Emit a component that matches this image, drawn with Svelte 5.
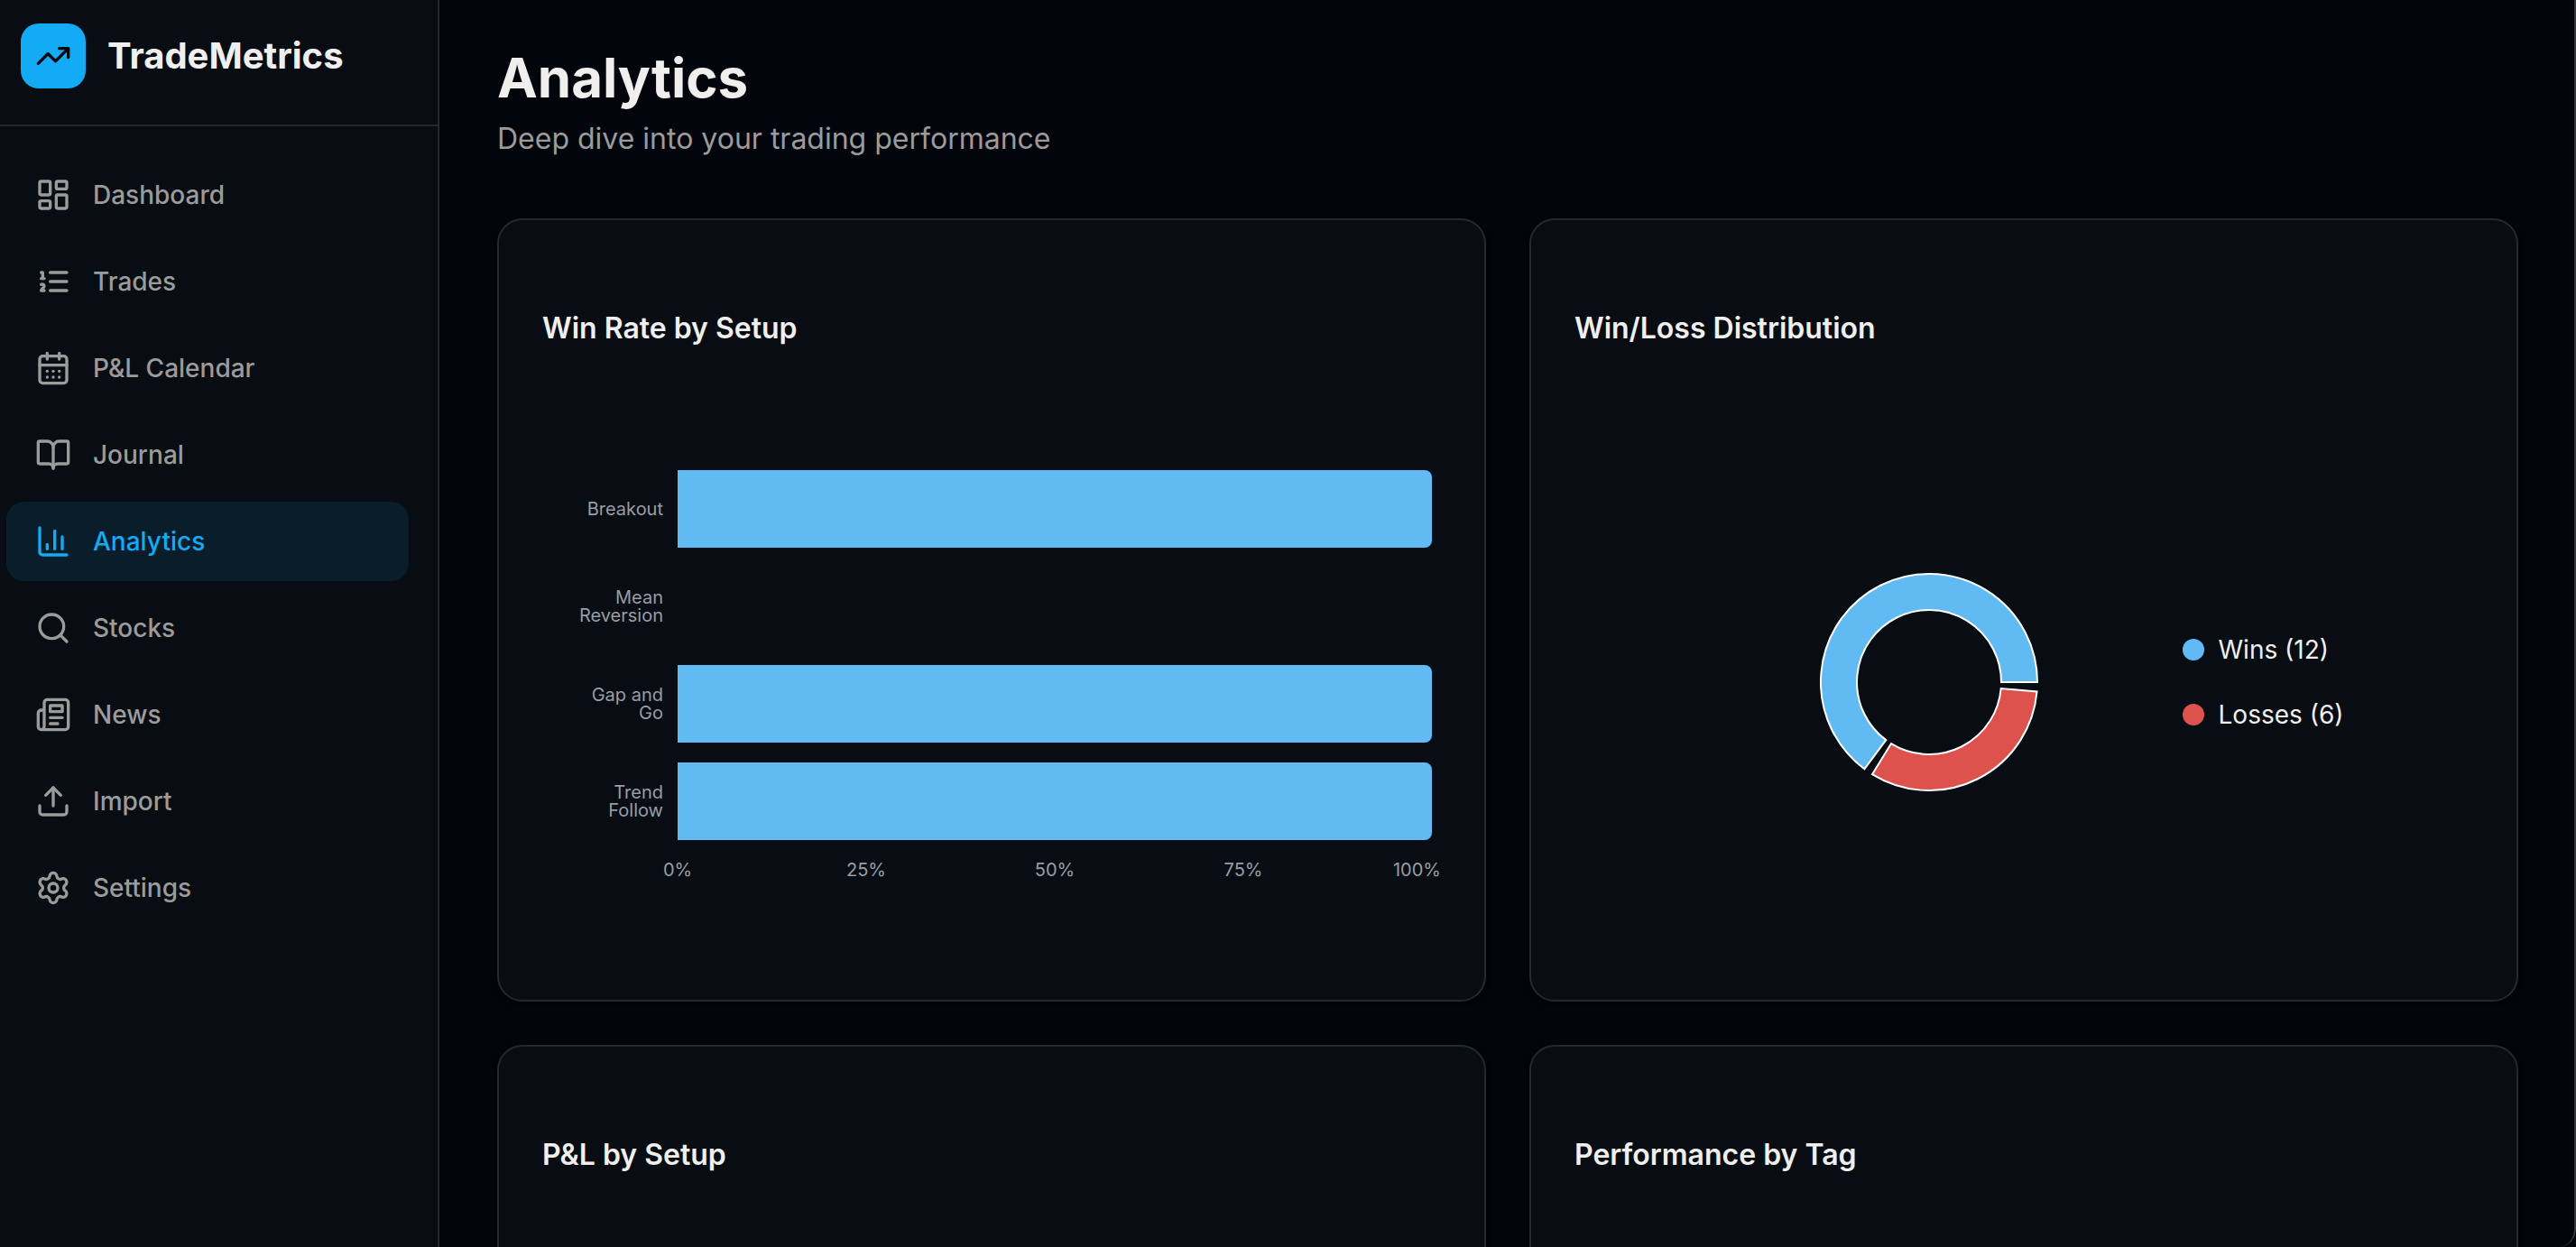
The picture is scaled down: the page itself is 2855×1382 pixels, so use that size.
<script>
	const nav = [
		{
			label: 'Dashboard',
			icon: '<rect width="7" height="9" x="3" y="3" rx="1"/><rect width="7" height="5" x="14" y="3" rx="1"/><rect width="7" height="9" x="14" y="12" rx="1"/><rect width="7" height="5" x="3" y="16" rx="1"/>'
		},
		{
			label: 'Trades',
			icon: '<path d="M10 12h11"/><path d="M10 18h11"/><path d="M10 6h11"/><path d="M4 10h2"/><path d="M4 6h1v4"/><path d="M6 18H4c0-1 2-2 2-3s-1-1.5-2-1"/>'
		},
		{
			label: 'P&L Calendar',
			icon: '<path d="M8 2v4"/><path d="M16 2v4"/><rect width="18" height="18" x="3" y="4" rx="2"/><path d="M3 10h18"/><path d="M8 14h.01"/><path d="M12 14h.01"/><path d="M16 14h.01"/><path d="M8 18h.01"/><path d="M12 18h.01"/><path d="M16 18h.01"/>'
		},
		{
			label: 'Journal',
			icon: '<path d="M12 7v14"/><path d="M3 18a1 1 0 0 1-1-1V4a1 1 0 0 1 1-1h5a4 4 0 0 1 4 4 4 4 0 0 1 4-4h5a1 1 0 0 1 1 1v13a1 1 0 0 1-1 1h-6a3 3 0 0 0-3 3 3 3 0 0 0-3-3z"/>'
		},
		{
			label: 'Analytics',
			icon: '<path d="M3 3v16a2 2 0 0 0 2 2h16"/><path d="M18 17V9"/><path d="M13 17V5"/><path d="M8 17v-3"/>'
		},
		{
			label: 'Stocks',
			icon: '<circle cx="11" cy="11" r="8"/><path d="m21 21-4.3-4.3"/>'
		},
		{
			label: 'News',
			icon: '<path d="M4 22h16a2 2 0 0 0 2-2V4a2 2 0 0 0-2-2H8a2 2 0 0 0-2 2v16a2 2 0 0 1-2 2Zm0 0a2 2 0 0 1-2-2v-9c0-1.1.9-2 2-2h2"/><path d="M18 14h-8"/><path d="M15 18h-5"/><path d="M10 6h8v4h-8V6Z"/>'
		},
		{
			label: 'Import',
			icon: '<path d="M12 3v12"/><path d="m17 8-5-5-5 5"/><path d="M21 15v4a2 2 0 0 1-2 2H5a2 2 0 0 1-2-2v-4"/>'
		},
		{
			label: 'Settings',
			icon: '<path d="M9.671 4.136a2.34 2.34 0 0 1 4.659 0 2.34 2.34 0 0 0 3.319 1.915 2.34 2.34 0 0 1 2.33 4.033 2.34 2.34 0 0 0 0 3.831 2.34 2.34 0 0 1-2.33 4.033 2.34 2.34 0 0 0-3.319 1.915 2.34 2.34 0 0 1-4.659 0 2.34 2.34 0 0 0-3.32-1.915 2.34 2.34 0 0 1-2.33-4.033 2.34 2.34 0 0 0 0-3.831A2.34 2.34 0 0 1 6.35 6.051a2.34 2.34 0 0 0 3.319-1.915"/><circle cx="12" cy="12" r="3"/>'
		}
	];

	let active = $state('Analytics');

	const setups = [
		{ name: 'Breakout', rate: 100 },
		{ name: 'Mean Reversion', rate: 0 },
		{ name: 'Gap and Go', rate: 100 },
		{ name: 'Trend Follow', rate: 100 }
	];

	const ticks = [0, 25, 50, 75, 100];

	const results = [
		{ name: 'Wins', value: 12, color: '#62baf3' },
		{ name: 'Losses', value: 6, color: '#dd524c' }
	];

	// donut slices, counter-clockwise from 3 o'clock
	const outer = 120;
	const inner = 80;
	const pad = 5;

	function point(r, deg) {
		const a = (deg * Math.PI) / 180;
		return `${(r * Math.cos(a)).toFixed(2)} ${(-r * Math.sin(a)).toFixed(2)}`;
	}

	function getSlices(items) {
		const total = items.reduce((sum, d) => sum + d.value, 0);
		const sweep = 360 - pad * items.length;
		let start = 0;
		return items.map((d) => {
			const end = start + (d.value / total) * sweep;
			const large = end - start > 180 ? 1 : 0;
			const path = `M ${point(outer, start)} A ${outer} ${outer} 0 ${large} 0 ${point(outer, end)} L ${point(inner, end)} A ${inner} ${inner} 0 ${large} 1 ${point(inner, start)} Z`;
			start = end + pad;
			return { ...d, path };
		});
	}

	const slices = getSlices(results);
</script>

<div class="app">
	<aside>
		<div class="brand">
			<div class="logo">
				<svg class="icon" viewBox="0 0 24 24" aria-hidden="true">
					<path d="M16 7h6v6" />
					<path d="m22 7-8.5 8.5-5-5L2 17" />
				</svg>
			</div>
			<span class="name">TradeMetrics</span>
		</div>
		<nav>
			{#each nav as item}
				<a
					href="#{item.label.toLowerCase()}"
					class:active={active === item.label}
					aria-current={active === item.label ? 'page' : undefined}
					onclick={() => (active = item.label)}
				>
					<svg class="icon" viewBox="0 0 24 24" aria-hidden="true">{@html item.icon}</svg>
					<span>{item.label}</span>
				</a>
			{/each}
		</nav>
	</aside>

	<main>
		<header>
			<h1>Analytics</h1>
			<p>Deep dive into your trading performance</p>
		</header>

		<div class="cards">
			<section class="card">
				<h2>Win Rate by Setup</h2>
				<div class="bar-chart">
					{#each setups as setup}
						<div class="row">
							<span class="label">{setup.name}</span>
							<div class="track">
								<div class="bar" style="width: {setup.rate}%"></div>
							</div>
						</div>
					{/each}
					<div class="axis">
						{#each ticks as tick}
							<span class="tick"><span>{tick}%</span></span>
						{/each}
					</div>
				</div>
			</section>

			<section class="card">
				<h2>Win/Loss Distribution</h2>
				<div class="distribution">
					<div class="donut">
						<svg viewBox="-124 -124 248 248" role="img" aria-label="Wins and losses">
							{#each slices as slice}
								<path d={slice.path} fill={slice.color} stroke="#fff" stroke-width="2" />
							{/each}
						</svg>
					</div>
					<ul>
						{#each results as result}
							<li>
								<span class="dot" style="background: {result.color}"></span>
								{result.name} ({result.value})
							</li>
						{/each}
					</ul>
				</div>
			</section>

			<section class="card">
				<h2>P&L by Setup</h2>
			</section>

			<section class="card">
				<h2>Performance by Tag</h2>
			</section>
		</div>
	</main>
</div>

<style>
	:global(body) {
		background: #02050c;
	}

	.app {
		display: flex;
		height: 100vh;
		box-sizing: border-box;
		overflow: hidden;
		border-right: 2px solid #36383c;
		border-bottom-right-radius: 20px;
		background: #02050c;
		color: #f0efed;
		font-family: Inter, 'Liberation Sans', sans-serif;
	}

	aside {
		flex: none;
		width: 485px;
		border-right: 2px solid #25282f;
		background: #080d14;
	}

	.brand {
		display: flex;
		align-items: center;
		gap: 24px;
		padding: 26px 23px 40px;
		border-bottom: 2px solid #25282f;
	}

	.logo {
		display: grid;
		place-items: center;
		width: 72px;
		height: 72px;
		border-radius: 20px;
		background: #14abf5;
		color: #02050c;
	}

	.icon {
		flex: none;
		width: 40px;
		height: 40px;
		fill: none;
		stroke: currentColor;
		stroke-width: 2;
		stroke-linecap: round;
		stroke-linejoin: round;
	}

	.name {
		font-size: 40px;
		line-height: 56px;
		font-weight: 700;
	}

	nav {
		display: flex;
		flex-direction: column;
		gap: 8px;
		padding: 32px 32px 32px 7px;
	}

	nav a {
		display: flex;
		align-items: center;
		gap: 24px;
		padding: 24px 32px;
		border-radius: 20px;
		color: #9c9b99;
		font-size: 28px;
		line-height: 40px;
		font-weight: 500;
		text-decoration: none;
	}

	nav a.active {
		background: #0a1d2a;
		color: #14abf5;
	}

	main {
		flex: 1;
		min-width: 0;
		padding: 48px 62px 0 64px;
	}

	h1 {
		margin: 0;
		font-size: 60px;
		line-height: 76px;
		font-weight: 700;
	}

	header p {
		margin: 6px 0 0;
		color: #9c9b99;
		font-size: 32px;
		line-height: 48px;
	}

	.cards {
		display: grid;
		grid-template-columns: 1fr 1fr;
		gap: 48px;
		margin-top: 64px;
	}

	.card {
		min-height: 720px;
		padding: 96px 48px 48px;
		border: 2px solid #25282f;
		border-radius: 28px;
		background: #080d14;
		box-shadow: 0 2px 4px #010306;
	}

	h2 {
		margin: 0;
		font-size: 32px;
		line-height: 48px;
		font-weight: 600;
	}

	.bar-chart {
		margin-top: 122px;
		padding-right: 10px;
		color: #9a9ca3;
		font-size: 20px;
		line-height: 20px;
	}

	.row {
		display: flex;
		align-items: center;
		gap: 16px;
		height: 108px;
	}

	.label {
		flex: none;
		box-sizing: border-box;
		width: 134px;
		padding-left: 36px;
		text-align: right;
	}

	.track {
		flex: 1;
		height: 80%;
	}

	.bar {
		height: 100%;
		border-radius: 0 8px 8px 0;
		background: #62baf3;
	}

	.axis {
		display: flex;
		justify-content: space-between;
		margin: 12px 0 0 150px;
	}

	.tick {
		display: flex;
		justify-content: center;
		width: 0;
	}

	/* keep the last label inside the card padding */
	.tick:last-child {
		justify-content: flex-end;
	}

	.tick:last-child span {
		margin-right: -10px;
	}

	.distribution {
		display: flex;
		align-items: center;
		justify-content: center;
		gap: 32px;
		height: 608px;
		margin-top: 64px;
	}

	.donut {
		display: flex;
		justify-content: center;
		width: 50%;
	}

	.donut svg {
		width: 248px;
		height: 248px;
	}

	ul {
		display: flex;
		flex-direction: column;
		gap: 32px;
		margin: 0;
		padding: 0;
		list-style: none;
	}

	li {
		display: flex;
		align-items: center;
		gap: 16px;
		font-size: 28px;
		line-height: 40px;
	}

	.dot {
		width: 24px;
		height: 24px;
		border-radius: 50%;
	}
</style>
